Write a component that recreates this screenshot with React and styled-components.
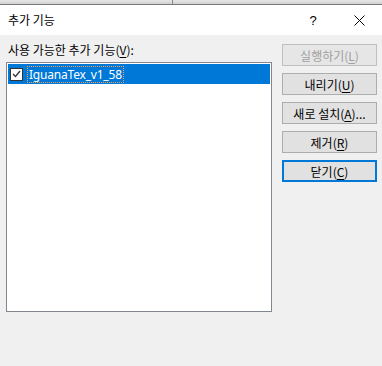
import React from "react";
import styled, { createGlobalStyle } from "styled-components";

const GlobalStyle = createGlobalStyle`
    html, body {
        margin: 0;
        padding: 0;
        background: #f0f0f0;
    }
    body {
        font-family: "Noto Sans CJK KR", "Noto Sans", sans-serif;
        font-size: 12px;
        color: #000;
    }
`;

const Dialog = styled.div`
    width: 382px;
    height: 366px;
    display: flex;
    flex-direction: column;
    background: #f0f0f0;
    overflow: hidden;
`;

const TopEdge = styled.div`
    height: 4px;
    background: linear-gradient(#e6e6e6, #d2d2d2);
    border-bottom: 1px solid #7a7a7a;
    position: relative;
`;

const EdgeTick = styled.span`
    position: absolute;
    left: 172px;
    top: 0;
    width: 1px;
    height: 4px;
    background: #8a8a8a;
`;

const TitleBar = styled.div`
    height: 30px;
    background: #fff;
    display: flex;
    align-items: center;
    padding-left: 8px;
`;

const Title = styled.div`
    flex: 1;
    font-size: 12px;
    line-height: 1;
`;

const TitleButton = styled.div`
    width: 46px;
    height: 30px;
    display: flex;
    align-items: center;
    justify-content: center;
    font-family: "Liberation Sans", sans-serif;
    font-size: 13px;
`;

const Body = styled.div`
    flex: 1;
    display: flex;
    gap: 10px;
    padding: 7px 6px 0 6px;
`;

const LeftColumn = styled.div`
    display: flex;
    flex-direction: column;
`;

const Label = styled.div`
    padding-left: 2px;
    height: 20px;
    line-height: 16px;
    font-size: 12px;
`;

const Hotkey = styled.span`
    text-decoration: underline;
    text-underline-offset: 2px;
`;

const ListBox = styled.div`
    width: 262px;
    height: 246px;
    background: #fff;
    border: 1px solid #828790;
    padding: 1px;
`;

const ListRow = styled.div`
    height: 20px;
    display: flex;
    align-items: center;
    gap: 5px;
    padding-left: 2px;
    background: ${(p) => (p.$selected ? "#0078d7" : "transparent")};
    color: ${(p) => (p.$selected ? "#fff" : "#000")};
`;

const CheckBox = styled.div`
    width: 11px;
    height: 11px;
    background: #fff;
    border: 1px solid #333;
    display: flex;
    align-items: center;
    justify-content: center;
`;

const ItemText = styled.span`
    font-family: "Noto Sans", sans-serif;
    font-size: 12px;
    letter-spacing: -0.2px;
    padding: 0 1px;
    line-height: 15px;
    outline: 1px dotted #f3a05a;
`;

const ButtonColumn = styled.div`
    display: flex;
    flex-direction: column;
    gap: 7px;
    padding-top: 2px;
`;

const Button = styled.div`
    width: 95px;
    height: 22px;
    box-sizing: border-box;
    display: flex;
    align-items: center;
    justify-content: center;
    background: #e1e1e1;
    border: ${(p) => (p.$default ? "2px solid #0078d7" : "1px solid #adadad")};
    color: ${(p) => (p.$disabled ? "#a0a0a0" : "#000")};
    font-size: 12px;
    ${(p) => (p.$disabled ? "background: #e6e6e6; border-color: #bfbfbf;" : "")}
`;

const CheckMark = () => (
    <svg width="9" height="8" viewBox="0 0 9 8">
        <path d="M1 4 L3.5 6.5 L8 1" fill="none" stroke="#333" strokeWidth="1.3" />
    </svg>
);

const CloseIcon = () => (
    <svg width="11" height="11" viewBox="0 0 11 11">
        <path d="M0.5 0.5 L10.5 10.5 M10.5 0.5 L0.5 10.5" stroke="#000" strokeWidth="1" />
    </svg>
);

export default function App() {
    return (
        <>
            <GlobalStyle />
            <Dialog>
                <TopEdge>
                    <EdgeTick />
                </TopEdge>
                <TitleBar>
                    <Title>추가 기능</Title>
                    <TitleButton>?</TitleButton>
                    <TitleButton>
                        <CloseIcon />
                    </TitleButton>
                </TitleBar>
                <Body>
                    <LeftColumn>
                        <Label>
                            사용 가능한 추가 기능(<Hotkey>V</Hotkey>):
                        </Label>
                        <ListBox>
                            <ListRow $selected>
                                <CheckBox>
                                    <CheckMark />
                                </CheckBox>
                                <ItemText>IguanaTex_v1_58</ItemText>
                            </ListRow>
                        </ListBox>
                    </LeftColumn>
                    <ButtonColumn>
                        <Button $disabled>
                            실행하기(<Hotkey>L</Hotkey>)
                        </Button>
                        <Button>
                            내리기(<Hotkey>U</Hotkey>)
                        </Button>
                        <Button>
                            새로 설치(<Hotkey>A</Hotkey>)...
                        </Button>
                        <Button>
                            제거(<Hotkey>R</Hotkey>)
                        </Button>
                        <Button $default>
                            닫기(<Hotkey>C</Hotkey>)
                        </Button>
                    </ButtonColumn>
                </Body>
            </Dialog>
        </>
    );
}
